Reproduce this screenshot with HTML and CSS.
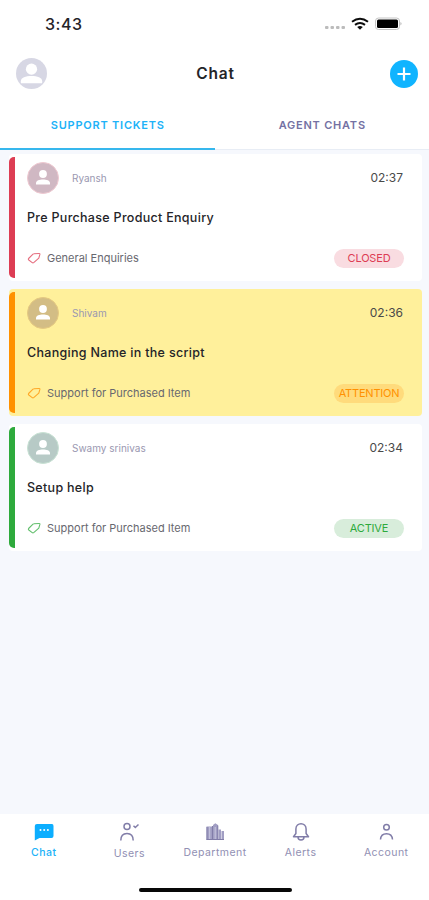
FILE: index.html
```html
<!DOCTYPE html>
<html lang="en">
<head>
<meta charset="utf-8">
<title>Chat</title>
<link rel="stylesheet" href="styles.css">
</head>
<body>
<svg width="0" height="0" class="defs">
  <symbol id="person" viewBox="0 0 30 30">
    <circle cx="15" cy="11" r="3.900" fill="#fff"/>
    <path d="M8 21.500v-1.500c0-2.600 3.500-3.600 7-3.600s7 1 7 3.600v1.500z" fill="#fff"/>
  </symbol>
  <symbol id="tag" viewBox="0 0 14 14">
    <path d="M1.600 7.500 6 3.200Q6.400 2.800 7 2.800L12 2.500Q13 2.500 12.900 3.400L11.800 7.200 7 11.400Q6 12.200 5.200 11.600L1.800 9Q1 8.200 1.600 7.500Z" fill="none" stroke="currentColor" stroke-width="1.100" stroke-linejoin="round"/>
  </symbol>
</svg>
<div class="phone">
  <div class="status-bar">
    <span class="clock">3:43</span>
    <svg class="signals" width="78" height="16" viewBox="0 0 78 16">
      <g fill="#bcbcbc"><rect x="0" y="9" width="3.500" height="3" rx="1"/><rect x="5.500" y="9" width="3.500" height="3" rx="1"/><rect x="11" y="9" width="3.500" height="3" rx="1"/><rect x="16.500" y="9" width="3.500" height="3" rx="1"/></g>
      <g fill="none" stroke="#0c0c0c" stroke-width="2"><path d="M27 4.800Q35 -1.300 43 4.800"/><path d="M30 7.900Q35 4.200 40 7.900"/></g>
      <path d="M32.200 9.900Q35 8.200 37.800 9.900L35 12.800Z" fill="#0c0c0c"/>
      <rect x="50.500" y="1" width="24" height="11.500" rx="3" fill="#fff" stroke="#c4c4c4"/>
      <rect x="52" y="2.500" width="21" height="8.500" rx="1.500" fill="#000"/>
      <path d="M75.500 5Q77.500 6.700 75.500 8.500Z" fill="#aaa"/>
    </svg>
  </div>
  <header class="header">
    <span class="avatar profile"><svg width="31" height="31" viewBox="0 0 32 32"><circle cx="16" cy="11.500" r="5.800" fill="#fff"/><path d="M5 26v-2c0-4 5-5.500 11-5.500s11 1.500 11 5.500v2z" fill="#fff"/></svg></span>
    <h1>Chat</h1>
    <span class="add"><svg width="28" height="28" viewBox="0 0 28 28"><path d="M14 7.500v13M7.500 14h13" stroke="#fff" stroke-width="2.200"/></svg></span>
  </header>
  <nav class="tabs">
    <span class="tab selected"><b>SUPPORT TICKETS</b></span>
    <span class="tab"><b>AGENT CHATS</b></span>
  </nav>
  <main class="tickets">
    <article class="ticket closed">
      <div class="top"><span class="avatar"><svg width="30" height="30"><use href="#person"/></svg></span><span class="name">Ryansh</span><time>02:37</time></div>
      <h2>Pre Purchase Product Enquiry</h2>
      <div class="bottom"><svg class="tag" width="14" height="14"><use href="#tag"/></svg><span class="topic">General Enquiries</span><span class="badge">CLOSED</span></div>
    </article>
    <article class="ticket attention">
      <div class="top"><span class="avatar"><svg width="30" height="30"><use href="#person"/></svg></span><span class="name">Shivam</span><time>02:36</time></div>
      <h2>Changing Name in the script</h2>
      <div class="bottom"><svg class="tag" width="14" height="14"><use href="#tag"/></svg><span class="topic">Support for Purchased Item</span><span class="badge">ATTENTION</span></div>
    </article>
    <article class="ticket active">
      <div class="top"><span class="avatar"><svg width="30" height="30"><use href="#person"/></svg></span><span class="name">Swamy srinivas</span><time>02:34</time></div>
      <h2>Setup help</h2>
      <div class="bottom"><svg class="tag" width="14" height="14"><use href="#tag"/></svg><span class="topic">Support for Purchased Item</span><span class="badge">ACTIVE</span></div>
    </article>
  </main>
  <nav class="bottom-nav">
    <span class="item current"><svg width="22" height="20" viewBox="0 0 22 20"><path d="M4 2h15q1.500 0 1.500 2v10q0 2-2 2H6.500L1.800 18.500V4q0-2 2.200-2z" fill="#0caeff"/><g fill="#fff"><circle cx="7.500" cy="8" r="1"/><circle cx="11.200" cy="8" r="1"/><circle cx="14.900" cy="8" r="1"/></g></svg><span>Chat</span></span>
    <span class="item users"><svg width="22" height="20" viewBox="0 0 22 20"><g fill="none" stroke="currentColor" stroke-width="1.500"><circle cx="9" cy="4.500" r="3"/><path d="M2.800 18.500c0-4.500 2.500-7 6.200-7s6.200 2.500 6.200 7M15.500 3.800l1.800 1.700 3.200-3"/></g></svg><span>Users</span></span>
    <span class="item"><svg width="22" height="20" viewBox="0 0 22 20"><path d="M2.500 4.500H8.500V18h-6zM9 3l2.300-1.800L14 3v15H9zM14.500 7.500H17V18h-2.500zM17.500 9H20v9h-2.500z" fill="#a19ec3"/><path d="M3 5v12.500M8.500 4v13.500M13.800 3.500v14M2.500 17.500H20" fill="none" stroke="currentColor"/><path d="M5.700 5v12M11.200 5v12" stroke="#c9c7df"/></svg><span>Department</span></span>
    <span class="item"><svg width="22" height="20" viewBox="0 0 22 20"><g fill="none" stroke="currentColor" stroke-width="1.500" stroke-linejoin="round"><path d="M5.900 11.500V7c0-7 10.200-7 10.200 0v4.500l2.400 3.300h-15zM8 15c0 4 6 4 6 0"/></g></svg><span>Alerts</span></span>
    <span class="item"><svg width="22" height="20" viewBox="0 0 22 20"><g fill="none" stroke="currentColor" stroke-width="1.500"><circle cx="11.500" cy="5.300" r="2.800"/><path d="M5.500 17.500c.3-4 2.500-5.800 6-5.800s5.700 1.800 6 5.800"/></g></svg><span>Account</span></span>
  </nav>
  <footer class="home"><span></span></footer>
</div>
</body>
</html>
```
FILE: styles.css
```css
* { box-sizing: border-box; }
body { margin: 0; font-family: Inter, "Noto Sans", sans-serif; color: #242428; }
.defs { display: block; }
.phone { width: 429px; height: 900px; display: flex; flex-direction: column; background: #fff; overflow: hidden; }
.status-bar { height: 48px; display: flex; justify-content: space-between; align-items: center; padding: 0 26px 0 45px; flex: none; }
.clock { font-size: 16px; font-weight: 500; letter-spacing: .5px; }
.signals { margin-top: 2px; }
.header { height: 51px; display: grid; grid-template-columns: 31px 1fr 28px; align-items: center; padding: 0 11px 0 16px; flex: none; }
.avatar { border-radius: 50%; display: block; overflow: hidden; flex: none; }
.avatar svg, .add svg { display: block; }
.profile { width: 31px; height: 31px; background: #d7d7e4; }
h1 { font-size: 15.500px; line-height: 20px; font-weight: 600; margin: 0; letter-spacing: .8px; text-align: center; padding-right: 6px; }
.add { width: 28px; height: 28px; border-radius: 50%; background: #10b4ff; }
.tabs { height: 51px; display: flex; flex: none; border-bottom: 1px solid #e8edf5; }
.tab { flex: 1; display: flex; align-items: center; justify-content: center; font-size: 11px; color: #7471a3; letter-spacing: .78px; padding: 2px 0 0 1px; }
.tab b { font-weight: 600; }
.selected { color: #20b2f8; border-bottom: 2px solid #36b7ed; margin-bottom: -1px; }
.tickets { flex: 1; background: #f6f8fd; padding: 4px 7px 0 9px; display: flex; flex-direction: column; gap: 8px; }
.ticket { height: 127px; position: relative; border-radius: 4px; background: #fff; padding: 8px 18px 0 18px; }
.ticket::before { content: ""; position: absolute; left: 0; top: 3px; bottom: 3px; width: 6px; background: var(--tone); border-radius: 5px 0 0 5px; }
.closed { --tone: #dd3d54; --soft: #f9dce1; --face: #d0b8c3; --rim: #efc9d1; }
.attention { --tone: #ff9100; --soft: #ffdb7c; --face: #d3bd85; --rim: #e5c981; background: #fff09b; }
.active { --tone: #2eaa3c; --soft: #d8eddb; --face: #b7cac6; --rim: #c8e2d4; }
.top { display: flex; align-items: center; height: 31px; }
.top .avatar { width: 32px; height: 32px; background: var(--face); border: 1px solid var(--rim); }
.name { font-size: 10px; color: #9a98b1; margin-left: 13px; }
time { font-size: 12px; margin: 0 1px 0 auto; color: #4a4a4a; }
h2 { font-size: 12.500px; line-height: 20px; font-weight: 500; letter-spacing: .3px; margin: 15px 0 0; white-space: nowrap; }
.bottom { display: flex; align-items: center; height: 20px; margin-top: 20px; font-size: 11px; color: #68686f; }
.tag { color: var(--tone); margin-right: 6px; opacity: .75; }
.badge { margin-left: auto; width: 70px; height: 19px; border-radius: 10px; background: var(--soft); color: var(--tone); font-size: 11px; letter-spacing: -.2px; display: flex; align-items: center; justify-content: center; }
.bottom-nav { display: grid; grid-template-columns: repeat(5, 1fr); height: 60px; padding: 8px 0 0 1px; flex: none; }
.item { display: flex; flex-direction: column; align-items: center; font-size: 10.500px; line-height: 16px; letter-spacing: .45px; color: #918fb3; gap: 3px; }
.item svg { color: #817da8; }
.users { gap: 4px; }
.current { color: #20b2f8; font-weight: 500; }
.home { height: 26px; flex: none; display: flex; justify-content: center; padding: 14px 0 0 2px; }
.home span { width: 153px; height: 4px; border-radius: 2px; background: #080808; }
```
